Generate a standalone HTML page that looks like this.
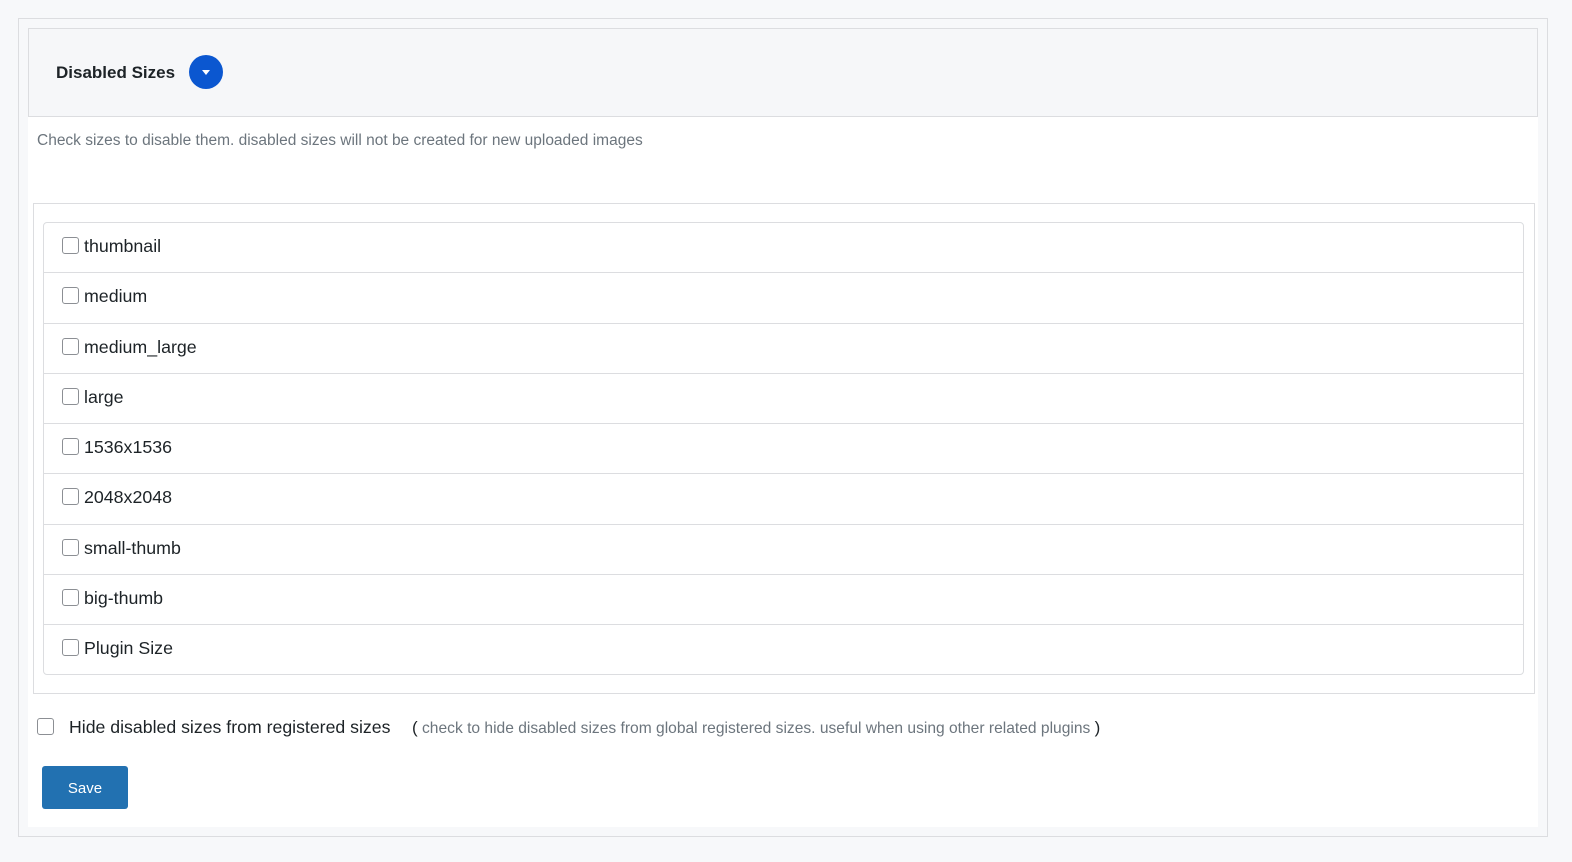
<!DOCTYPE html>
<html><head><style>
*{box-sizing:border-box;margin:0;padding:0}
body{width:1572px;height:862px;background:#f7f8fa;font-family:"Liberation Sans",sans-serif;position:relative;overflow:hidden}
.outer{position:absolute;left:18px;top:18px;width:1530px;height:819px;border:1px solid #dcdde0;background:#f7f8fa}
.panel{position:absolute;left:28px;top:116px;width:1510px;height:711px;background:#fff}
.head{position:absolute;left:28px;top:28px;width:1510px;height:89px;border:1px solid #dcdde0;background:#f6f7f9}
.title{position:absolute;left:56px;top:63px;font-size:17px;font-weight:bold;color:#1d2327}
.circ{position:absolute;left:189px;top:55px;width:34px;height:34px;border-radius:50%;background:#0b57d0}
.circ:after{content:"";position:absolute;left:13px;top:15px;border-left:4px solid transparent;border-right:4px solid transparent;border-top:5px solid #fff}
.desc{position:absolute;left:37px;top:132px;font-size:15.5px;color:#6c757d}
.wrap{position:absolute;left:33px;top:203px;width:1502px;height:491px;border:1px solid #dcdde0}
.list{position:absolute;left:43px;top:222px;width:1481px;height:453px;border:1px solid #dcdde0;border-radius:4px}
.row{height:50.3px;border-bottom:1px solid #dcdde0;position:relative}
.row:last-child{border-bottom:none}
.cb{position:absolute;width:17px;height:17px;border:1px solid #8c8f94;border-radius:3px;background:#fff}
.row .cb{left:18px;top:14px}
.row span{position:absolute;left:40px;top:13px;font-size:17.8px;color:#1d2327}
.hide{position:absolute;left:69px;top:717px;font-size:17.7px;color:#1d2327}
.note{position:absolute;left:412px;top:718px;font-size:15.6px;color:#6c757d}
.note b{font-weight:normal;color:#1d2327;font-size:17px}
.save{position:absolute;left:42px;top:766px;width:86px;height:43px;background:#2271b1;border-radius:3px;color:#fff;font-size:15px;text-align:center;line-height:45px}
</style></head><body>
<div class="outer"></div>
<div class="panel"></div>
<div class="head"></div>
<div class="title">Disabled Sizes</div>
<div class="circ"></div>
<div class="desc">Check sizes to disable them. disabled sizes will not be created for new uploaded images</div>
<div class="wrap"></div>
<div class="list">
<div class="row"><div class="cb"></div><span>thumbnail</span></div>
<div class="row"><div class="cb"></div><span>medium</span></div>
<div class="row"><div class="cb"></div><span>medium_large</span></div>
<div class="row"><div class="cb"></div><span>large</span></div>
<div class="row"><div class="cb"></div><span>1536x1536</span></div>
<div class="row"><div class="cb"></div><span>2048x2048</span></div>
<div class="row"><div class="cb"></div><span>small-thumb</span></div>
<div class="row"><div class="cb"></div><span>big-thumb</span></div>
<div class="row"><div class="cb"></div><span>Plugin Size</span></div>
</div>
<div class="cb" style="left:37px;top:718px"></div>
<div class="hide">Hide disabled sizes from registered sizes</div>
<div class="note"><b>(</b> check to hide disabled sizes from global registered sizes. useful when using other related plugins <b>)</b></div>
<div class="save">Save</div>
</body></html>
